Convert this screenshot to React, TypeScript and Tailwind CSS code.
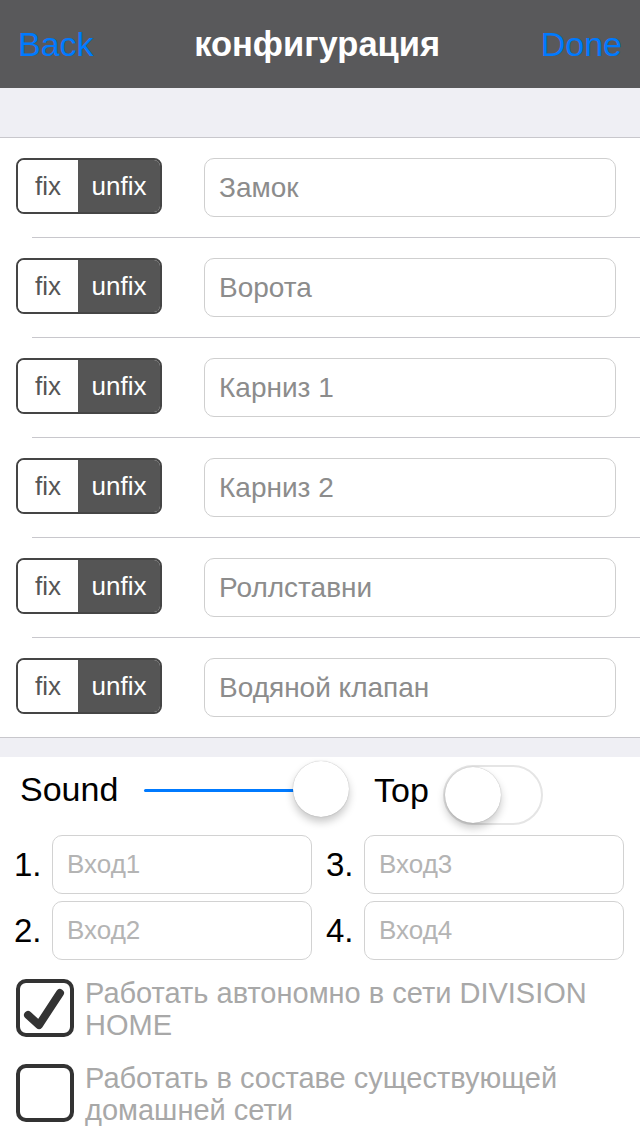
import React from "react";

const devices = ["Замок", "Ворота", "Карниз 1", "Карниз 2", "Роллставни", "Водяной клапан"];

function FixToggle() {
  return (
    <div className="flex w-[146px] h-[56px] shrink-0 rounded-[8px] border-2 border-[#454545] overflow-hidden text-[26px] leading-none">
      <div className="w-[60px] flex items-center justify-center bg-white text-[#555]">fix</div>
      <div className="flex-1 flex items-center justify-center bg-[#555555] text-white">unfix</div>
    </div>
  );
}

function DeviceRow({ name }: { name: string }) {
  return (
    <div className="flex items-start h-[99px] pt-5 pl-4">
      <FixToggle />
      <input
        readOnly
        placeholder={name}
        className="ml-[42px] w-[412px] h-[59px] rounded-[10px] border border-[#cfcfcf] pl-[14px] text-[28px] outline-none placeholder:text-[#8c8c8c]"
      />
    </div>
  );
}

function NumberedInput({ n, label }: { n: string; label: string }) {
  return (
    <>
      <span className="w-[38px] text-[33px] leading-none text-black">{n}</span>
      <input
        readOnly
        placeholder={label}
        className="w-[260px] h-[59px] rounded-[10px] border border-[#d2d2d2] pl-[14px] text-[26px] outline-none placeholder:text-[#b4b4b4]"
      />
    </>
  );
}

function CheckRow({ checked, children }: { checked?: boolean; children: React.ReactNode }) {
  return (
    <div className="flex items-start h-[85px] pl-4">
      <div className="w-[58px] h-[58px] shrink-0 rounded-[10px] border-4 border-[#333]">
        {checked && (
          <svg width="50" height="50" viewBox="0 0 50 50">
            <path d="M8 32 L19 42 L40 10" fill="none" stroke="#333" strokeWidth="8" strokeLinecap="round" strokeLinejoin="round" />
          </svg>
        )}
      </div>
      <p className="ml-[11px] -mt-[2px] text-[29px] leading-[32px] text-[#a8a8a8]">{children}</p>
    </div>
  );
}

export default function App() {
  return (
    <div className="w-[640px] h-[1136px] bg-white overflow-hidden font-['Liberation_Sans',Arial,sans-serif]">
      <div className="h-[88px] bg-[#59595b] flex items-center justify-between px-[18px] text-[34px] leading-none">
        <span className="text-[#007aff]">Back</span>
        <span className="text-white font-bold text-[34.5px]">конфигурация</span>
        <span className="text-[#007aff]">Done</span>
      </div>
      <div className="h-[50px] bg-[#efeff4] border-b border-[#c8c7cc]" />

      {devices.map((d, i) => (
        <div key={d}>
          <DeviceRow name={d} />
          <div className={i < devices.length - 1 ? "ml-8 h-px bg-[#c8c7cc]" : "h-px bg-[#c8c7cc]"} />
        </div>
      ))}
      <div className="h-[19px] bg-[#efeff4]" />

      <div className="flex items-start h-[70px] pl-5">
        <span className="w-[124px] mt-[16px] text-[34px] leading-[32px] text-black">Sound</span>
        <div className="w-[156px] h-[3px] mt-[32px] rounded-full bg-[#007aff]" />
        <div className="-ml-[7px] mt-[4px] w-[56px] h-[56px] rounded-full bg-white shadow-[0_5px_8px_rgba(0,0,0,0.22),0_0_1px_rgba(0,0,0,0.35)]" />
        <span className="ml-[25px] w-[69px] mt-[17px] text-[34px] leading-[32px] text-black">Top</span>
        <div className="mt-[8px] w-[100px] h-[60px] rounded-full border-2 border-[#e5e5e5] bg-white flex items-center">
          <div className="w-[56px] h-[56px] rounded-full bg-white shadow-[0_5px_8px_rgba(0,0,0,0.22),0_0_1px_rgba(0,0,0,0.35)]" />
        </div>
      </div>

      <div className="mt-2 flex flex-col gap-[7px] pl-[14px]">
        <div className="flex items-center">
          <NumberedInput n="1." label="Вход1" />
          <span className="ml-[14px]" />
          <NumberedInput n="3." label="Вход3" />
        </div>
        <div className="flex items-center">
          <NumberedInput n="2." label="Вход2" />
          <span className="ml-[14px]" />
          <NumberedInput n="4." label="Вход4" />
        </div>
      </div>

      <div className="mt-[19px]">
        <CheckRow checked>
          Работать автономно в сети DIVISION
          <br />
          HOME
        </CheckRow>
        <CheckRow>
          Работать в составе существующей
          <br />
          домашней сети
        </CheckRow>
      </div>
    </div>
  );
}
